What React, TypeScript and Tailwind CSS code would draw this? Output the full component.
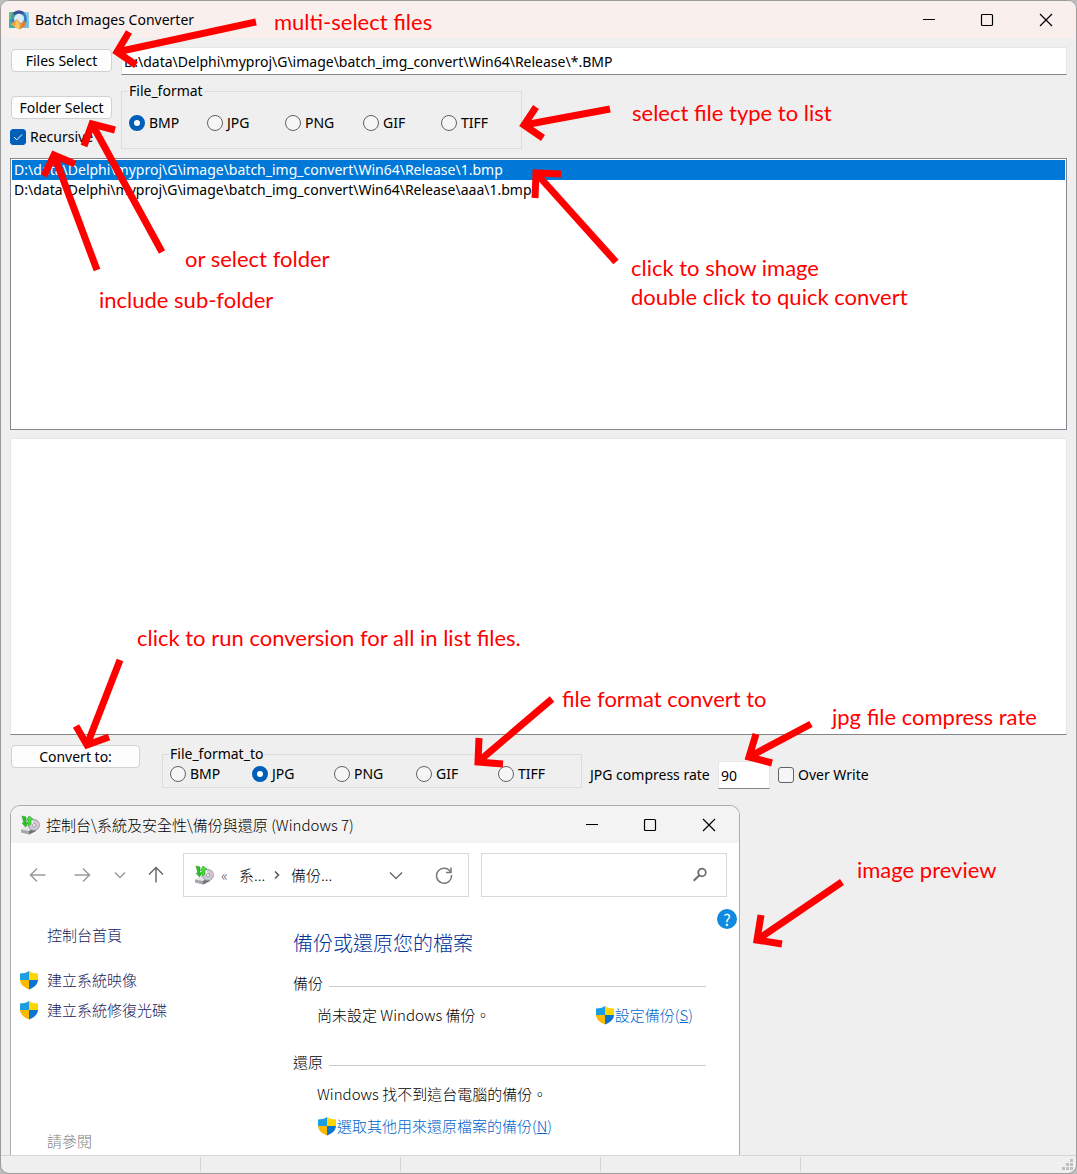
import { useState } from "react";

const UI = "font-['Noto_Sans','Noto_Sans_CJK_TC',sans-serif]";
const CJK = "font-['Noto_Sans_CJK_TC',sans-serif]";

const FORMATS = ["BMP", "JPG", "PNG", "GIF", "TIFF"];
const FILES = [
  "D:\\data\\Delphi\\myproj\\G\\image\\batch_img_convert\\Win64\\Release\\1.bmp",
  "D:\\data\\Delphi\\myproj\\G\\image\\batch_img_convert\\Win64\\Release\\aaa\\1.bmp",
];

function AppLogo() {
  return (
    <svg width="20" height="20" viewBox="0 0 20 20" aria-hidden="true">
      <rect x="0" y="2" width="11" height="9" rx="1" fill="#5cc08a" />
      <rect x="10" y="2" width="10" height="9" rx="1" fill="#8ccbe6" />
      <rect x="0" y="9" width="10" height="9" rx="1" fill="#35b0a8" />
      <rect x="10" y="10" width="10" height="8" rx="1" fill="#74c0e2" />
      <circle cx="10" cy="8.500" r="6.500" fill="#d5edf7" stroke="#3d7cc0" strokeWidth="3" />
      <path d="M4 6a6.500 6.500 0 0 1 10-2.500" fill="none" stroke="#3b4f96" strokeWidth="3" />
      <path d="M3.500 9a6.500 6.500 0 0 1 1.500-4.500" fill="none" stroke="#4d9a9c" strokeWidth="3" />
      <path d="M1.500 14.500 8 9l4 4.500 3-2.500 2 4-6.500 4.500z" fill="#f2a23a" />
      <path d="m8 9 2.500 6 0 4.500-5-2.500z" fill="#f8c967" />
      <path d="m15 11 2 4-6.500 4.500 2-5z" fill="#e5793a" />
    </svg>
  );
}

function BackupIcon() {
  return (
    <svg width="20" height="20" viewBox="0 0 20 20" aria-hidden="true">
      <path d="M1 14.500 8 11l8 1.500v3.500L9 19.500l-8-2z" fill="#a4a7aa" />
      <path d="M1 14.500 8 11l8 1.500L9 16z" fill="#e4e6e8" />
      <path d="M9 16v3.500l7-3.500v-3.500z" fill="#6f7377" />
      <circle cx="14" cy="10" r="5.500" fill="#c9cbd0" stroke="#8b8e94" strokeWidth=".8" />
      <path d="M14 10 18.500 7a5.500 5.500 0 0 1 .8 4z" fill="#e6b8d8" />
      <path d="M14 10 9.500 7.500a5.500 5.500 0 0 1 3-2.700z" fill="#f3f3f6" />
      <circle cx="14" cy="10" r="1.500" fill="#fff" stroke="#777" strokeWidth=".6" />
      <path d="m2 1 4 1v6l2-.5L5.500 12 2 8l2 .2z" fill="#27c427" stroke="#148a14" strokeWidth=".5" />
      <path d="M8 11V5L6.500 5.500 9 1l4 3-2 .5V9z" fill="#4be03a" stroke="#148a14" strokeWidth=".5" />
    </svg>
  );
}

function Shield() {
  return (
    <svg width="20" height="20" viewBox="0 0 20 20" aria-hidden="true" className="shrink-0">
      <path d="M10 1C7.500 3 4 3.200 1 3.500V10h9z" fill="#1b9de2" />
      <path d="M10 1c2.500 2 6 2.200 9 2.500V10h-9z" fill="#ffd500" />
      <path d="M1 10c.2 4.500 4 7.500 9 9.500V10z" fill="#fdb900" />
      <path d="M19 10c-.2 4.500-4 7.500-9 9.500V10z" fill="#0a74d1" />
    </svg>
  );
}

function CaptionButtons() {
  return (
    <div className="flex items-center self-stretch">
      <button type="button" aria-label="Minimize" className="flex h-full w-[58px] items-center justify-center">
        <svg width="14" height="14" viewBox="0 0 14 14" fill="none" stroke="#000">
          <path d="M1 6.500h12" />
        </svg>
      </button>
      <button type="button" aria-label="Maximize" className="flex h-full w-[58px] items-center justify-center">
        <svg width="14" height="14" viewBox="0 0 14 14" fill="none" stroke="#000" strokeWidth="1.200">
          <rect x="1.500" y="1.500" width="11" height="11" rx="1" />
        </svg>
      </button>
      <button type="button" aria-label="Close" className="flex h-full w-[60px] items-center justify-center">
        <svg width="14" height="14" viewBox="0 0 14 14" fill="none" stroke="#000" strokeWidth="1.200">
          <path d="m1 1 12 12M13 1 1 13" />
        </svg>
      </button>
    </div>
  );
}

function PushButton({ children }: { children: string }) {
  return (
    <button
      type="button"
      className="h-[23px] w-full rounded-[4px] border border-[#d2d2d2] bg-[#fdfdfd] text-sm leading-[21px]"
    >
      {children}
    </button>
  );
}

function RadioGroup({ name, legend, initial, item, box }: { name: string; legend: string; initial: string; item: string; box: string }) {
  const [value, setValue] = useState(initial);
  return (
    <fieldset className={`border border-[#dcdcdc] ${box}`}>
      <legend className="ml-[6px] px-px text-sm leading-5">{legend}</legend>
      <div className="flex pl-[7px]">
        {FORMATS.map((f) => (
          <label key={f} className={`flex items-center gap-1 text-sm leading-5 ${item}`}>
            <input
              type="radio"
              name={name}
              checked={value === f}
              onChange={() => setValue(f)}
              className="size-4 shrink-0 appearance-none rounded-full border border-[#626262] bg-[#f6f6f6] checked:border-[5px] checked:border-[#005fb8] checked:bg-white"
            />
            {f}
          </label>
        ))}
      </div>
    </fieldset>
  );
}

function Check({ label, initial }: { label: string; initial: boolean }) {
  const [on, setOn] = useState(initial);
  return (
    <label className="flex items-center gap-1 text-sm leading-5 whitespace-nowrap">
      <span className="relative flex size-4">
        <input
          type="checkbox"
          checked={on}
          onChange={(e) => setOn(e.target.checked)}
          className="size-4 appearance-none rounded-[3px] border border-[#626262] bg-[#f6f6f6] checked:border-[#005fb8] checked:bg-[#005fb8]"
        />
        {on && (
          <svg className="pointer-events-none absolute inset-0" width="16" height="16" viewBox="0 0 16 16" fill="none" stroke="#fff">
            <path d="m4 8 2.800 2.800L12 5.500" />
          </svg>
        )}
      </span>
      {label}
    </label>
  );
}

function NavButton({ label, d, width, color }: { label: string; d: string; width: string; color: string }) {
  return (
    <button type="button" aria-label={label} className={`flex justify-center ${width} ${color}`}>
      <svg width="18" height="18" viewBox="0 0 18 18" fill="none" stroke="currentColor" strokeWidth="1.500">
        <path d={d} />
      </svg>
    </button>
  );
}

function SectionTitle({ children }: { children: string }) {
  return (
    <div className="flex items-center gap-[6px] pr-[11px]">
      <h3 className="text-[15px] leading-5">{children}</h3>
      <div className="mt-[7px] h-px flex-1 bg-[#cbcbcb]" />
    </div>
  );
}

function Preview() {
  return (
    <section
      className={`flex w-[730px] max-w-full flex-1 flex-col overflow-hidden rounded-t-[10px] border border-b-0 border-[#ababab] bg-white text-[15px] leading-5 font-light ${CJK}`}
    >
      <header className="flex h-[37px] items-center gap-[6px] bg-[#f3f3f3] pl-[9px]">
        <BackupIcon />
        <h2 className="flex-1">控制台\系統及安全性\備份與還原 (Windows 7)</h2>
        <CaptionButtons />
      </header>
      <div className="flex items-center pt-[10px] pr-3 pl-[7px]">
        <NavButton label="Back" width="w-[40px]" color="text-[#9a9a9a]" d="M16.500 9h-15M8 2.500 1.500 9 8 15.500" />
        <NavButton label="Forward" width="w-[48px]" color="text-[#9a9a9a]" d="M1.500 9h15M10 2.500 16.500 9 10 15.500" />
        <NavButton label="Recent" width="w-[28px]" color="text-[#9a9a9a]" d="m4 6.500 5 5 5-5" />
        <NavButton label="Up" width="w-[44px]" color="text-[#6a6a6a]" d="M9 16.500v-15M2 8.500l7-7 7 7" />
        <div className="ml-[5px] flex h-[44px] w-[286px] items-center border border-[#d9d9d9] pl-[10px]">
          <BackupIcon />
          <span className="ml-[7px] w-[18px] text-[#555]">«</span>
          <span className="w-[28px]">系...</span>
          <svg className="w-[24px]" width="24" height="12" viewBox="0 0 24 12" fill="none" stroke="#555" strokeWidth="1.500">
            <path d="m8 2.500 3.500 3.500L8 9.500" />
          </svg>
          <span className="flex-1">備份...</span>
          <NavButton label="History" width="w-[48px]" color="text-[#6a6a6a]" d="m3 6.500 6 6 6-6" />
          <NavButton label="Refresh" width="w-[48px]" color="text-[#7a7a7a]" d="M15.800 6.500A7.500 7.500 0 1 0 16.500 9M16 1.500v5h-5" />
        </div>
        <div className="ml-3 flex h-[44px] flex-1 items-center border border-[#d9d9d9] pr-[18px]">
          <input aria-label="搜尋" className="h-full min-w-0 flex-1 px-2 outline-none" />
          <svg width="16" height="16" viewBox="0 0 16 16" fill="none" stroke="#6e6e6e">
            <circle cx="10" cy="5.500" r="3.800" strokeWidth="1.800" />
            <path d="m7.300 8.200-5.600 5.600" strokeWidth="2" />
          </svg>
        </div>
      </div>
      <div className="flex flex-1">
        <nav className="flex w-[282px] flex-col pt-[28px] pb-[4px] pl-[8px]">
          <a href="#home" className="pl-[28px] text-[#151b5c]">控制台首頁</a>
          <a href="#image" className="mt-[25px] flex items-center gap-[8px] text-[#151b5c]"><Shield />建立系統映像</a>
          <a href="#disc" className="mt-[10px] flex items-center gap-[8px] text-[#151b5c]"><Shield />建立系統修復光碟</a>
          <span className="mt-auto pl-[28px] text-[#838383]">請參閱</span>
        </nav>
        <div className="flex-1 pt-[32px]">
          <h1 className="text-[20px] leading-7 text-[#003399]">備份或還原您的檔案</h1>
          <div className="mt-[16px]"><SectionTitle>備份</SectionTitle></div>
          <div className="mt-[12px] flex items-center justify-between pr-[24px] pl-[24px]">
            <span>尚未設定 Windows 備份。</span>
            <a href="#setup" className="flex items-center text-[#0066cc]"><Shield /><span>設定備份(<u>S</u>)</span></a>
          </div>
          <div className="mt-[27px]"><SectionTitle>還原</SectionTitle></div>
          <p className="mt-[12px] pl-[24px]">Windows 找不到這台電腦的備份。</p>
          <a href="#pick" className="mt-[12px] flex items-center pl-[24px] text-[#0066cc]"><Shield /><span>選取其他用來還原檔案的備份(<u>N</u>)</span></a>
        </div>
        <div className="w-[22px] pt-[12px]">
          <button type="button" aria-label="說明" className="size-5 rounded-full bg-[#0f8ade] text-base leading-5 font-normal text-white">?</button>
        </div>
      </div>
    </section>
  );
}

const ARROWS = [
  { shaft: "M256 22 117 52", head: "M129 32 117 52 136 65" },
  { shaft: "M610 109 524 125", head: "M536 107 524 125 543 138" },
  { shaft: "M162 252 92 124", head: "M84 146 92 124 115 130" },
  { shaft: "M97 270 54 155", head: "M44 176 54 155 75 164" },
  { shaft: "M616 262 536 173", head: "M535 198 536 173 561 174" },
  { shaft: "M120 660 87 745", head: "M76 726 87 745 109 737" },
  { shaft: "M552 699 478 762", head: "M479 738 478 762 503 764" },
  { shaft: "M811 724 749 757", head: "M756 734 749 757 772 763" },
  { shaft: "M842 882 757 940", head: "M761 915 757 940 782 944" },
];

const NOTES = [
  { text: "multi-select files", at: "left-[274px] top-[7px]" },
  { text: "select file type to list", at: "left-[632px] top-[98px]" },
  { text: "or select folder", at: "left-[185px] top-[244px]" },
  { text: "include sub-folder", at: "left-[99px] top-[285px]" },
  { text: "click to show image\ndouble click to quick convert", at: "left-[631px] top-[253px]" },
  { text: "click to run conversion for all in list files.", at: "left-[137px] top-[623px]" },
  { text: "file format convert to", at: "left-[562px] top-[684px]" },
  { text: "jpg file compress rate", at: "left-[832px] top-[702px]" },
  { text: "image preview", at: "left-[857px] top-[855px]" },
];

function Annotations() {
  return (
    <div className="pointer-events-none absolute -inset-px overflow-hidden">
      <svg className="absolute top-0 left-0" width="1077" height="1174" viewBox="0 0 1077 1174" fill="none" stroke="#ff0000" strokeWidth="7">
        {ARROWS.map((a) => (
          <g key={a.shaft}>
            <path d={a.shaft} />
            <path d={a.head} />
          </g>
        ))}
      </svg>
      {NOTES.map((n) => (
        <p key={n.text} className={`absolute font-['Lato',sans-serif] text-[22px] leading-[29px] whitespace-pre text-[#ff0000] ${n.at}`}>
          {n.text}
        </p>
      ))}
    </div>
  );
}

export default function App() {
  const [selected, setSelected] = useState(0);
  return (
    <div className="bg-[#bdbdbd]">
      <div className={`relative flex min-h-screen flex-col overflow-hidden rounded-[9px] border border-[#9b9b9b] bg-[#efefef] text-black ${UI}`}>
        <header className="flex h-[37px] items-center gap-[6px] bg-[#f9f0ee] pl-[8px]">
          <AppLogo />
          <h1 className="flex-1 text-sm leading-5">Batch Images Converter</h1>
          <CaptionButtons />
        </header>

        <main className="flex flex-1 flex-col px-[9px] pt-[9px]">
          <div className="flex gap-[9px]">
            <div className="w-[102px] shrink-0 pt-px pl-px"><PushButton>Files Select</PushButton></div>
            <input
              aria-label="Path"
              defaultValue={"D:\\data\\Delphi\\myproj\\G\\image\\batch_img_convert\\Win64\\Release\\*.BMP"}
              className="h-[28px] min-w-0 flex-1 border border-b-[#858585] border-[#e6e6e6] bg-white px-[2px] text-sm outline-none"
            />
          </div>
          <div className="mt-[6px] flex gap-[9px]">
            <div className="w-[102px] shrink-0 pt-[14px]">
              <div className="pl-px"><PushButton>Folder Select</PushButton></div>
              <div className="mt-[8px]"><Check label="Recursive" initial /></div>
            </div>
            <RadioGroup name="from" legend="File_format" initial="BMP" item="w-[78px]" box="w-[401px] h-[68px] [&>div]:pt-3" />
          </div>

          <ul role="listbox" aria-label="Files" className="mt-[9px] h-[272px] border border-[#828790] bg-white p-px">
            {FILES.map((f, i) => (
              <li
                key={f}
                role="option"
                aria-selected={selected === i}
                onClick={() => setSelected(i)}
                className="truncate px-[2px] text-sm leading-5 aria-selected:bg-[#0078d7] aria-selected:text-white"
              >
                {f}
              </li>
            ))}
          </ul>

          <textarea
            aria-label="Log"
            className="mt-[8px] block h-[297px] w-full resize-none border border-b-[#858585] border-[#e6e6e6] bg-white p-1 text-sm outline-none"
          />

          <div className="flex items-start">
            <div className="w-[130px] pt-[9px] pl-px"><PushButton>Convert to:</PushButton></div>
            <div className="ml-[22px] pt-[9px]">
              <RadioGroup name="to" legend="File_format_to" initial="JPG" item="w-[82px]" box="w-[420px] h-[44px]" />
            </div>
            <div className="flex items-center pt-[26px] pl-2">
              <label htmlFor="rate" className="w-[128px] text-sm leading-5 whitespace-nowrap">JPG compress rate</label>
              <input
                id="rate"
                defaultValue="90"
                className="mr-[8px] h-[28px] w-[52px] border border-b-[#858585] border-[#e6e6e6] bg-white px-[2px] text-sm outline-none"
              />
              <Check label="Over Write" initial={false} />
            </div>
          </div>

          <div className="mt-[16px] flex flex-1 flex-col">
            <Preview />
          </div>
        </main>

        <footer className="flex h-[18px] border-t border-[#d5d5d5]">
          {[0, 1, 2, 3].map((n) => (
            <div key={n} className="my-px w-[200px] border-r border-[#d5d5d5]" />
          ))}
          <div className="flex flex-1 items-end justify-end p-[2px]">
            <svg width="12" height="12" viewBox="0 0 12 12" fill="#bfbfbf" aria-hidden="true">
              <path d="M8 0h3v3H8zM8 4h3v3H8zM4 4h3v3H4zM8 8h3v3H8zM4 8h3v3H4zM0 8h3v3H0z" />
            </svg>
          </div>
        </footer>

        <Annotations />
      </div>
    </div>
  );
}
